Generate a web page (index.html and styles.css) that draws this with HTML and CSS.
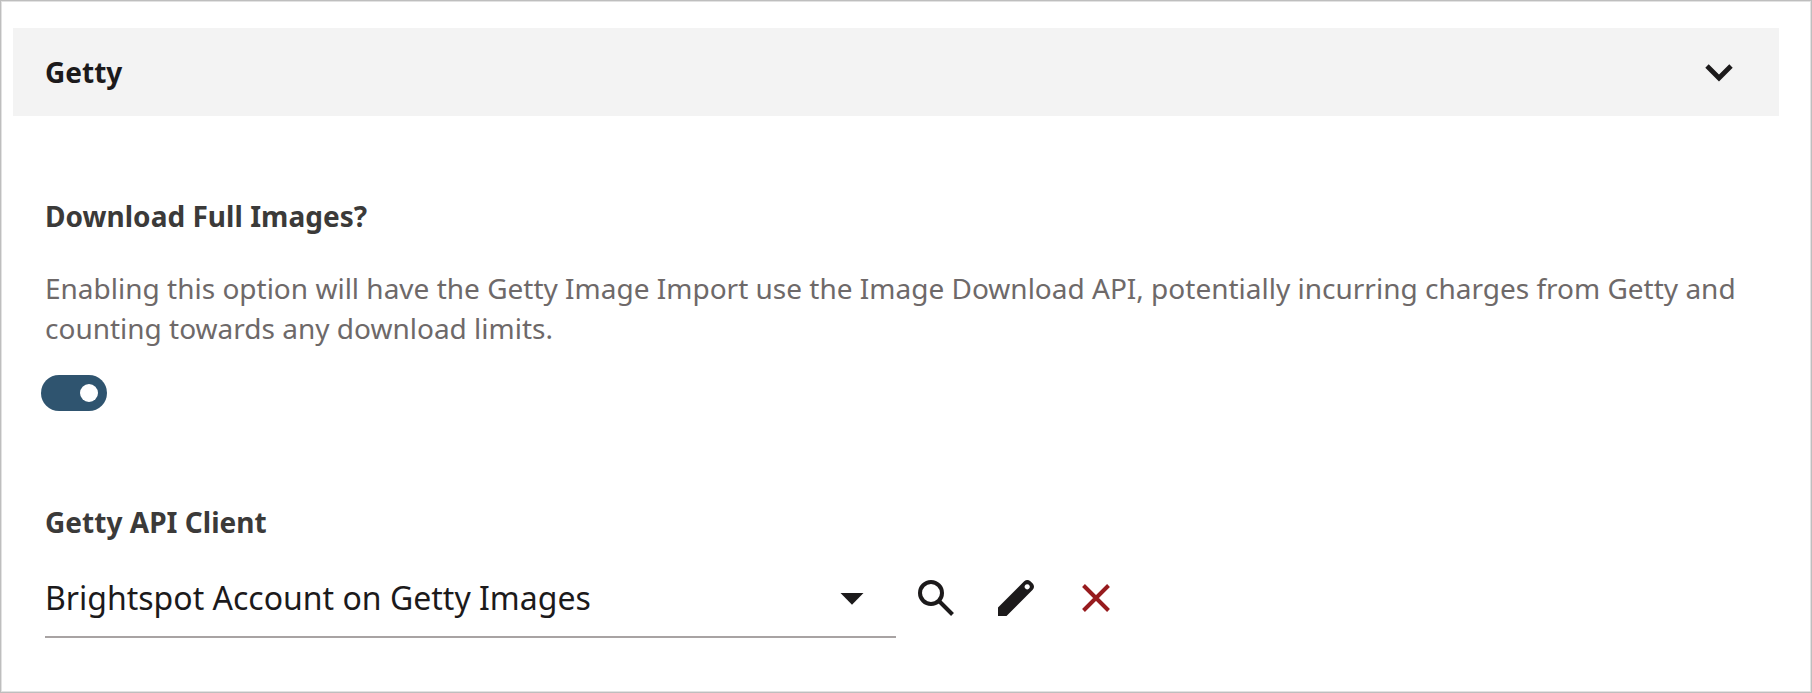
FILE: index.html
```html
<!DOCTYPE html>
<html lang="en">

<head>
    <meta charset="UTF-8">
    <meta name="viewport" content="width=device-width, initial-scale=1.0">
    <title>Getty</title>

    <link rel="stylesheet" href="styles.css">
</head>

<body>

    <div class="panel">
        <div class="section-header">
            <h2>Getty</h2>
            <svg class="chevron" width="28" height="18" viewBox="0 0 28 18">
                <path d="M2 2 L14 14 L26 2" fill="none" stroke="#1c1a1b" stroke-width="4.8" />
            </svg>
        </div>

        <div class="field">
            <h3>Download Full Images?</h3>
            <p class="note">Enabling this option will have the Getty Image Import use the Image Download API, potentially incurring charges from Getty and counting towards any download limits.</p>
            <label class="toggle">
                <input type="checkbox" checked />
            </label>
        </div>

        <div class="field client">
            <h3>Getty API Client</h3>
            <div class="row">
                <div class="select">
                    <span>Brightspot Account on Getty Images</span>
                    <svg class="caret" width="24" height="12" viewBox="0 0 24 12">
                        <path d="M0.5 0 H23.5 L12 11.8 Z" fill="#1c1a1b" />
                    </svg>
                </div>
                <div class="actions">
                    <svg width="36" height="36" viewBox="0 0 36 36">
                        <circle cx="13" cy="13" r="11" fill="none" stroke="#1c1a1b" stroke-width="4" />
                        <path d="M21 21 L34.5 34.5" stroke="#1c1a1b" stroke-width="4" />
                    </svg>
                    <svg width="36" height="36" viewBox="0 0 36 36">
                        <path fill="#1c1a1b" fill-rule="evenodd" d="M0 27.5 L26.2 1.3 Q29.3 -1.3 32.4 1.3 L34.7 3.6 Q37.3 6.7 34.7 9.8 L8.5 36 H0 Z M29.2 4.2 a2.6 2.6 0 1 0 0.01 0 Z" />
                    </svg>
                    <svg width="36" height="36" viewBox="0 0 36 36">
                        <path d="M5.5 5.5 L30.5 30.5 M30.5 5.5 L5.5 30.5" stroke="#971b1e" stroke-width="4" />
                    </svg>
                </div>
            </div>
        </div>
    </div>

</body>

</html>
```
FILE: styles.css
```css
* {
    box-sizing: border-box;
}

body {
    margin: 0;
    font-family: "Noto Sans", sans-serif;
    font-size: 28px;
    line-height: 40px;
    background: #fff;
}

h2,
h3,
p {
    margin: 0;
    font-size: 28px;
}

.panel {
    height: 693px;
    padding: 27px 32px 0 12px;
    border: 1px solid #bebebe;
    box-shadow: inset 0 0 0 1px #e2e2e2;
    overflow: hidden;
}

.section-header {
    display: flex;
    align-items: center;
    justify-content: space-between;
    height: 88px;
    padding: 0 46px 0 32px;
    color: #1c1a1b;
    background: #f3f3f3;
}

.chevron {
    margin-top: 2px;
}

.field {
    padding: 80px 32px 0;
}

.client {
    padding-top: 91px;
}

h3 {
    color: #3b3a39;
    letter-spacing: 0.03px;
}

.note {
    margin-top: 32px;
    color: #6e6969;
}

.toggle {
    display: flex;
    align-items: center;
    justify-content: flex-end;
    width: 66px;
    height: 36px;
    margin: 27px 0 0 -4px;
    padding-right: 9px;
    border-radius: 18px;
    background: #2f546f;
}

.toggle input {
    appearance: none;
    width: 18px;
    height: 18px;
    margin: 0;
    border-radius: 50%;
    background: #fff;
}

.row {
    display: flex;
    margin-top: 34px;
}

.select {
    display: flex;
    align-items: center;
    justify-content: space-between;
    width: 851px;
    height: 62px;
    padding: 0 32px 16px 0;
    border-bottom: 2px solid #a8a3a3;
    font-size: 32px;
    line-height: 44px;
    color: #1c1a1b;
}

.caret {
    margin-top: 2px;
}

.actions {
    display: flex;
    gap: 44px;
    margin: 4px 0 0 22px;
}
```
